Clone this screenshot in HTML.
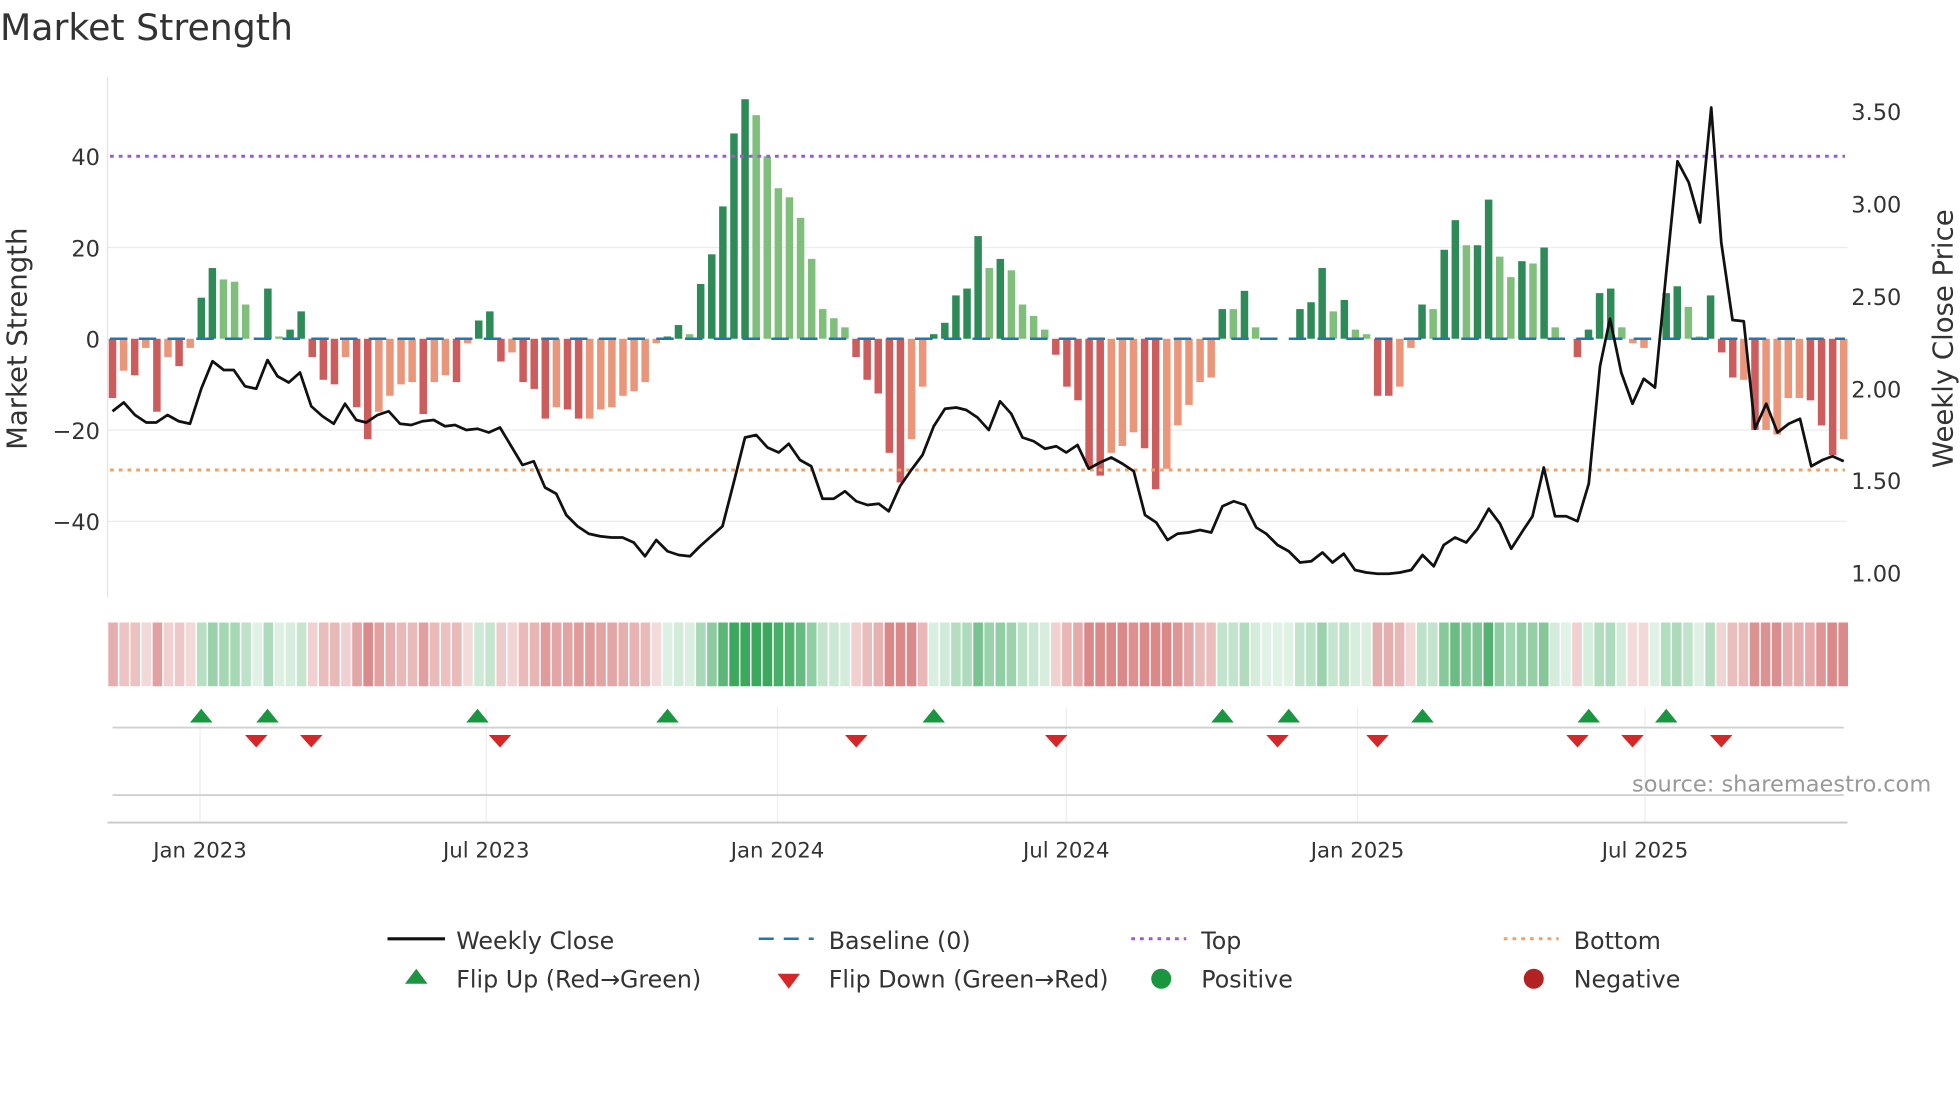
<!DOCTYPE html>
<html><head><meta charset="utf-8"><style>
html,body{margin:0;padding:0;background:#fff;width:1960px;height:1102px;overflow:hidden}
svg text{font-family:"DejaVu Sans","Liberation Sans",sans-serif;fill:#333}
</style></head><body>
<svg id="s" width="1960" height="1102" viewBox="0 0 1568 881.6" xmlns="http://www.w3.org/2000/svg">
<text x="0" y="32" font-size="29">Market Strength</text>
<g stroke="#ececf0" stroke-width="1">
<line x1="86" x2="1478" y1="198" y2="198"/><line x1="86" x2="1478" y1="344" y2="344"/><line x1="86" x2="1478" y1="417" y2="417"/>
</g>
<line x1="86" x2="86" y1="62" y2="478" stroke="#e4e4e4"/>
<g font-size="18" text-anchor="end">
<text x="80" y="132">40</text><text x="80" y="205">20</text><text x="80" y="278">0</text><text x="80" y="351">−20</text><text x="80" y="424">−40</text>
</g>
<g font-size="18">
<text x="1481" y="96">3.50</text><text x="1481" y="170">3.00</text><text x="1481" y="244">2.50</text><text x="1481" y="318">2.00</text><text x="1481" y="391">1.50</text><text x="1481" y="465">1.00</text>
</g>
<text transform="translate(21,271) rotate(-90)" font-size="22" text-anchor="middle">Market Strength</text>
<text transform="translate(1562,271) rotate(-90)" font-size="22" text-anchor="middle">Weekly Close Price</text>
<g id="bars"></g>
<line x1="88" x2="1476" y1="271" y2="271" stroke="#1f77b4" stroke-width="2" stroke-dasharray="14,9"/>
<line x1="88" x2="1476" y1="125" y2="125" stroke="#9b59d6" stroke-width="2.4" stroke-dasharray="3,4"/>
<line x1="88" x2="1476" y1="376" y2="376" stroke="#f0a060" stroke-width="2.4" stroke-dasharray="3,4"/>
<polyline id="pl" fill="none" stroke="#111" stroke-width="2.2" stroke-linejoin="round"/>
<g id="strip"></g>
<g stroke="#eeeeee">
<line x1="160" x2="160" y1="566" y2="658"/><line x1="389" x2="389" y1="566" y2="658"/><line x1="622" x2="622" y1="566" y2="658"/><line x1="853" x2="853" y1="566" y2="658"/><line x1="1086" x2="1086" y1="566" y2="658"/><line x1="1316" x2="1316" y1="566" y2="658"/>
</g>
<line x1="90" x2="1475" y1="582" y2="582" stroke="#d0d0d0" stroke-width="1.5"/>
<line x1="90" x2="1475" y1="636" y2="636" stroke="#d0d0d0" stroke-width="1.5"/>
<line x1="86" x2="1478" y1="658" y2="658" stroke="#c8c8c8" stroke-width="1.5"/>
<g id="mk"></g>
<text x="1545" y="633" font-size="18" text-anchor="end" style="fill:#999">source: sharemaestro.com</text>
<g font-size="17" text-anchor="middle">
<text x="160" y="686">Jan 2023</text><text x="389" y="686">Jul 2023</text><text x="622" y="686">Jan 2024</text><text x="853" y="686">Jul 2024</text><text x="1086" y="686">Jan 2025</text><text x="1316" y="686">Jul 2025</text>
</g>
<g font-size="19">
<line x1="310" x2="356" y1="751" y2="751" stroke="#111" stroke-width="2.5"/><text x="365" y="759">Weekly Close</text>
<line x1="607" x2="651" y1="751" y2="751" stroke="#1f77b4" stroke-width="2" stroke-dasharray="12,8"/><text x="663" y="759">Baseline (0)</text>
<line x1="905" x2="949" y1="751" y2="751" stroke="#9b59d6" stroke-width="2.4" stroke-dasharray="3,4"/><text x="961" y="759">Top</text>
<line x1="1203" x2="1247" y1="751" y2="751" stroke="#f0a060" stroke-width="2.4" stroke-dasharray="3,4"/><text x="1259" y="759">Bottom</text>
<polygon points="333,775 324,787 342,787" fill="#1a9641"/><text x="365" y="790">Flip Up (Red→Green)</text>
<polygon points="622,779 640,779 631,791" fill="#d62728"/><text x="663" y="790">Flip Down (Green→Red)</text>
<circle cx="929" cy="783" r="8" fill="#1a9641"/><text x="961" y="790">Positive</text>
<circle cx="1227" cy="783" r="8" fill="#b22222"/><text x="1259" y="790">Negative</text>
</g>
</svg>
<script>
var B=[[-13,1],[-7,0],[-8,1],[-2,0],[-16,1],[-4,0],[-6,1],[-2,0],[9,1],[15.5,1],[13,0],[12.5,0],[7.5,0],[0,0],[11,1],[0.5,0],[2,1],[6,1],[-4,1],[-9,1],[-10,1],[-4,0],[-15,1],[-22,1],[-16,0],[-12.5,0],[-10,0],[-9.5,0],[-16.5,1],[-9.5,0],[-8,0],[-9.5,1],[-1,0],[4,1],[6,1],[-5,1],[-3,0],[-9.5,1],[-11,1],[-17.5,1],[-15,0],[-15.5,1],[-17.5,1],[-17.5,0],[-15.5,0],[-15,0],[-12.5,0],[-11.5,0],[-9.5,0],[-1,0],[0.5,1],[3,1],[1,0],[12,1],[18.5,1],[29,1],[45,1],[52.5,1],[49,0],[40,0],[33,0],[31,0],[26.5,0],[17.5,0],[6.5,0],[4.5,0],[2.5,0],[-4,1],[-9,1],[-12,1],[-25,1],[-31.5,1],[-22,0],[-10.5,0],[1,1],[3.5,1],[9.5,1],[11,1],[22.5,1],[15.5,0],[17.5,1],[15,0],[7.5,0],[5,0],[2,0],[-3.5,1],[-10.5,1],[-13.5,1],[-28,1],[-30,1],[-25,0],[-23.5,0],[-20.5,0],[-24,1],[-33,1],[-28.5,0],[-19,0],[-14.5,0],[-9.5,0],[-8.5,0],[6.5,1],[6.5,0],[10.5,1],[2.5,0],[0,0],[0,0],[0,0],[6.5,1],[8,1],[15.5,1],[6,0],[8.5,1],[2,0],[1,0],[-12.5,1],[-12.5,1],[-10.5,0],[-2,0],[7.5,1],[6.5,0],[19.5,1],[26,1],[20.5,0],[20.5,1],[30.5,1],[18,0],[13.5,0],[17,1],[16.5,0],[20,1],[2.5,0],[0,0],[-4,1],[2,1],[10,1],[11,1],[2.5,0],[-1,0],[-2,0],[0,0],[10,1],[11.5,1],[7,0],[0.5,0],[9.5,1],[-3,1],[-8.5,1],[-9,0],[-20,1],[-20,0],[-21,0],[-13,0],[-13,0],[-13.5,1],[-19,1],[-25.5,1],[-22,0]];
var P=[[90,329],[99,322],[108,332],[117,338],[125,338],[134,332],[143,337],[152,339],[161,311],[170,289],[179,296],[187,296],[196,309],[205,311],[214,288],[222,301],[231,306],[240,298],[249,325],[258,333],[267,339],[276,323],[285,336],[293,338],[302,332],[311,329],[320,339],[329,340],[338,337],[347,336],[356,341],[364,340],[373,344],[382,343],[391,346],[400,342],[409,357],[418,372],[427,369],[436,390],[445,395],[453,412],[462,421],[471,427],[480,429],[489,430],[498,430],[507,434],[516,445],[525,432],[534,441],[543,444],[552,445],[560,437],[569,429],[578,421],[587,386],[596,350],[605,348],[614,358],[623,362],[631,355],[640,368],[649,373],[658,399],[667,399],[676,393],[685,401],[694,404],[703,403],[711,409],[720,389],[729,376],[738,364],[747,341],[756,327],[765,326],[773,328],[782,334],[791,344],[800,321],[809,331],[818,350],[827,353],[836,359],[845,357],[853,362],[862,356],[871,375],[880,370],[889,366],[898,371],[907,377],[916,412],[925,418],[934,432],[942,427],[951,426],[960,424],[969,426],[978,405],[987,401],[996,404],[1005,422],[1013,427],[1022,436],[1031,441],[1040,450],[1049,449],[1058,442],[1066,450],[1075,443],[1084,456],[1093,458],[1102,459],[1111,459],[1120,458],[1129,456],[1138,444],[1147,453],[1155,436],[1164,430],[1173,434],[1182,423],[1191,407],[1200,419],[1209,439],[1218,425],[1226,413],[1235,374],[1244,413],[1253,413],[1262,417],[1271,387],[1280,293],[1288,255],[1297,298],[1306,323],[1315,303],[1324,310],[1333,218],[1342,129],[1351,146],[1360,178],[1369,86],[1377,194],[1386,256],[1395,257],[1404,343],[1413,323],[1422,346],[1431,339],[1440,335],[1449,373],[1458,368],[1466,365],[1475,369]];
var NS="http://www.w3.org/2000/svg";
function el(t,a,p){var e=document.createElementNS(NS,t);for(var k in a)e.setAttribute(k,a[k]);p.appendChild(e);return e;}
var gb=document.getElementById('bars'),gs=document.getElementById('strip'),n=B.length,step=(1475-90)/(n-1);
var sw=(1479-86)/n;
for(var i=0;i<n;i++){var v=B[i][0],d=B[i][1],x=90+i*step,h=Math.abs(v)*3.65;
 var c=v>=0?(d?'#2e8b57':'#7fbf7b'):(d?'#cd5c5c':'#e9967a');
 if(h>0.3)el('rect',{x:x-3,y:v>=0?271-h:271,width:6,height:h,fill:c},gb);
 var sc=v>=0?'rgba(49,163,84,'+(0.15+Math.min(0.8,v/45))+')':'rgba(200,80,80,'+(0.18+Math.min(0.5,-v/45))+')';
 el('rect',{x:86+i*sw+0.6,y:498,width:sw-1.2,height:51,fill:sc},gs);}
document.getElementById('pl').setAttribute('points',P.map(function(p){return p.join(',')}).join(' '));
var gm=document.getElementById('mk');
[161,214,382,534,747,978,1031,1138,1271,1333].forEach(function(x){el('polygon',{points:(x)+',567 '+(x-9)+',578 '+(x+9)+',578',fill:'#1a9641'},gm)});
[205,249,400,685,845,1022,1102,1262,1306,1377].forEach(function(x){el('polygon',{points:(x-9)+',588 '+(x+9)+',588 '+x+',598',fill:'#d62728'},gm)});
</script>
</body></html>
